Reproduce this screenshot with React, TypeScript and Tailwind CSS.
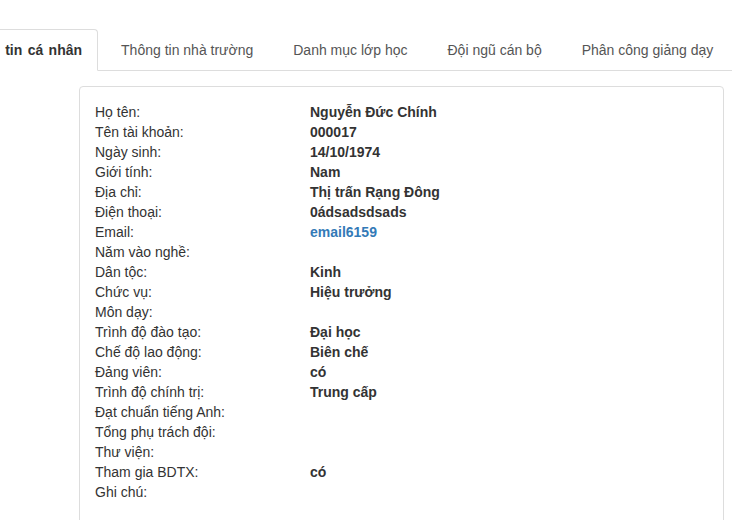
import React from "react";

const rows: { label: string; value?: string; link?: boolean }[] = [
  { label: "Họ tên:", value: "Nguyễn Đức Chính" },
  { label: "Tên tài khoản:", value: "000017" },
  { label: "Ngày sinh:", value: "14/10/1974" },
  { label: "Giới tính:", value: "Nam" },
  { label: "Địa chỉ:", value: "Thị trấn Rạng Đông" },
  { label: "Điện thoại:", value: "0ádsadsdsads" },
  { label: "Email:", value: "email6159", link: true },
  { label: "Năm vào nghề:" },
  { label: "Dân tộc:", value: "Kinh" },
  { label: "Chức vụ:", value: "Hiệu trưởng" },
  { label: "Môn dạy:" },
  { label: "Trình độ đào tạo:", value: "Đại học" },
  { label: "Chế độ lao động:", value: "Biên chế" },
  { label: "Đảng viên:", value: "có" },
  { label: "Trình độ chính trị:", value: "Trung cấp" },
  { label: "Đạt chuẩn tiếng Anh:" },
  { label: "Tổng phụ trách đội:" },
  { label: "Thư viện:" },
  { label: "Tham gia BDTX:", value: "có" },
  { label: "Ghi chú:" },
];

const tabs = [
  "Thông tin nhà trường",
  "Danh mục lớp học",
  "Đội ngũ cán bộ",
  "Phân công giảng dạy",
];

export default function App() {
  return (
    <div
      className="w-[732px] h-[520px] overflow-hidden bg-white text-[14px] leading-[20px] text-[#333]"
      style={{ fontFamily: '"Liberation Sans", Arial, sans-serif' }}
    >
      <div className="pt-[29px]">
        <div className="border-b border-[#ddd] h-[42px]">
          <ul className="flex ml-[-62px] whitespace-nowrap">
            <li className="mr-[4px] mb-[-1px]">
              <span className="block pl-[18px] pr-[15px] py-[10px] border border-[#ddd] border-b-transparent rounded-t-[4px] bg-white font-bold text-[#333] [word-spacing:1.5px]">
                Thông tin cá nhân
              </span>
            </li>
            {tabs.map((t) => (
              <li key={t} className="mr-[2px] mb-[-1px]">
                <span className="block px-[18px] py-[10px] border border-transparent text-[#555]">
                  {t}
                </span>
              </li>
            ))}
          </ul>
        </div>
      </div>
      <div className="ml-[79px] mt-[15px] w-[645px] h-[500px] border border-[#ddd] rounded-[4px] px-[15px] pt-[15px]">
        {rows.map((r) => (
          <div key={r.label} className="flex h-[20px]">
            <div className="w-[215px] shrink-0">{r.label}</div>
            <div
              className={
                r.link ? "font-bold text-[#337ab7]" : "font-bold text-[#333]"
              }
            >
              {r.value ?? ""}
            </div>
          </div>
        ))}
      </div>
    </div>
  );
}
